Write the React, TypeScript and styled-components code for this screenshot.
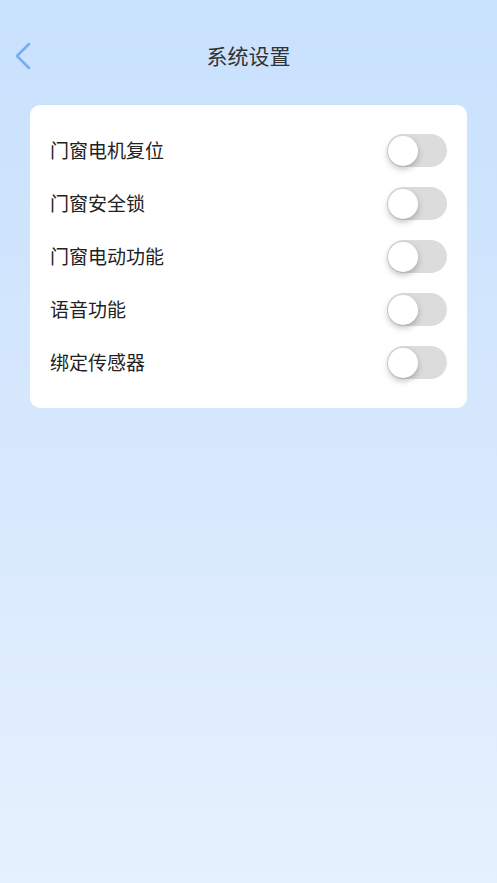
import React, { useState } from "react";
import styled, { createGlobalStyle } from "styled-components";

const GlobalStyle = createGlobalStyle`
  html, body {
    margin: 0;
    padding: 0;
  }
  body {
    font-family: "Noto Sans CJK SC", "Noto Sans", sans-serif;
  }
`;

const Page = styled.div`
  min-height: 883px;
  background: linear-gradient(180deg, #c8e1fd 0%, #d6e8fd 50%, #e6f1fe 100%);
  display: flex;
  flex-direction: column;
`;

const NavBar = styled.header`
  height: 112px;
  display: grid;
  grid-template-columns: 60px 1fr 60px;
  align-items: start;
  padding-top: 36px;
  box-sizing: border-box;
`;

const BackButton = styled.button`
  border: none;
  background: none;
  padding: 0 0 0 14px;
  height: 40px;
  display: flex;
  align-items: center;
  cursor: pointer;
`;

const Title = styled.h1`
  margin: 0;
  text-align: center;
  font-size: 21px;
  font-weight: 400;
  line-height: 38px;
  color: #333;
`;

// white card holding the toggles
const Card = styled.section`
  margin: -7px 30px 0;
  background: #fff;
  border-radius: 10px;
  padding: 19px 20px 19px 20px;
`;

const Row = styled.div`
  height: 53px;
  display: flex;
  align-items: center;
  justify-content: space-between;
`;

const Label = styled.span`
  font-size: 19px;
  line-height: 1;
  padding-bottom: 3px;
  color: #222;
`;

const Track = styled.button<{ $on: boolean }>`
  position: relative;
  width: 60px;
  height: 33px;
  border: none;
  padding: 0;
  border-radius: 17px;
  background: ${(p) => (p.$on ? "#6ea8f5" : "#dcdcdc")};
  cursor: pointer;
  transition: background 0.2s;
`;

const Knob = styled.span<{ $on: boolean }>`
  position: absolute;
  top: 1.5px;
  left: ${(p) => (p.$on ? "28px" : "1px")};
  width: 30px;
  height: 30px;
  border-radius: 50%;
  background: #fff;
  box-shadow: 0 3px 6px rgba(0, 0, 0, 0.25);
  transition: left 0.2s;
`;

const items = ["门窗电机复位", "门窗安全锁", "门窗电动功能", "语音功能", "绑定传感器"];

export default function App() {
  const [state, setState] = useState<boolean[]>(items.map(() => false));

  return (
    <Page>
      <GlobalStyle />
      <NavBar>
        <BackButton aria-label="back">
          <svg width="18" height="28" viewBox="0 0 18 28">
            <path d="M15 2 L3 14 L15 26" fill="none" stroke="#78acf5" strokeWidth="2.6" strokeLinecap="round" strokeLinejoin="round" />
          </svg>
        </BackButton>
        <Title>系统设置</Title>
        <div />
      </NavBar>
      <Card>
        {items.map((label, i) => (
          <Row key={label}>
            <Label>{label}</Label>
            <Track
              $on={state[i]}
              onClick={() => setState((s) => s.map((v, j) => (j === i ? !v : v)))}
            >
              <Knob $on={state[i]} />
            </Track>
          </Row>
        ))}
      </Card>
    </Page>
  );
}
